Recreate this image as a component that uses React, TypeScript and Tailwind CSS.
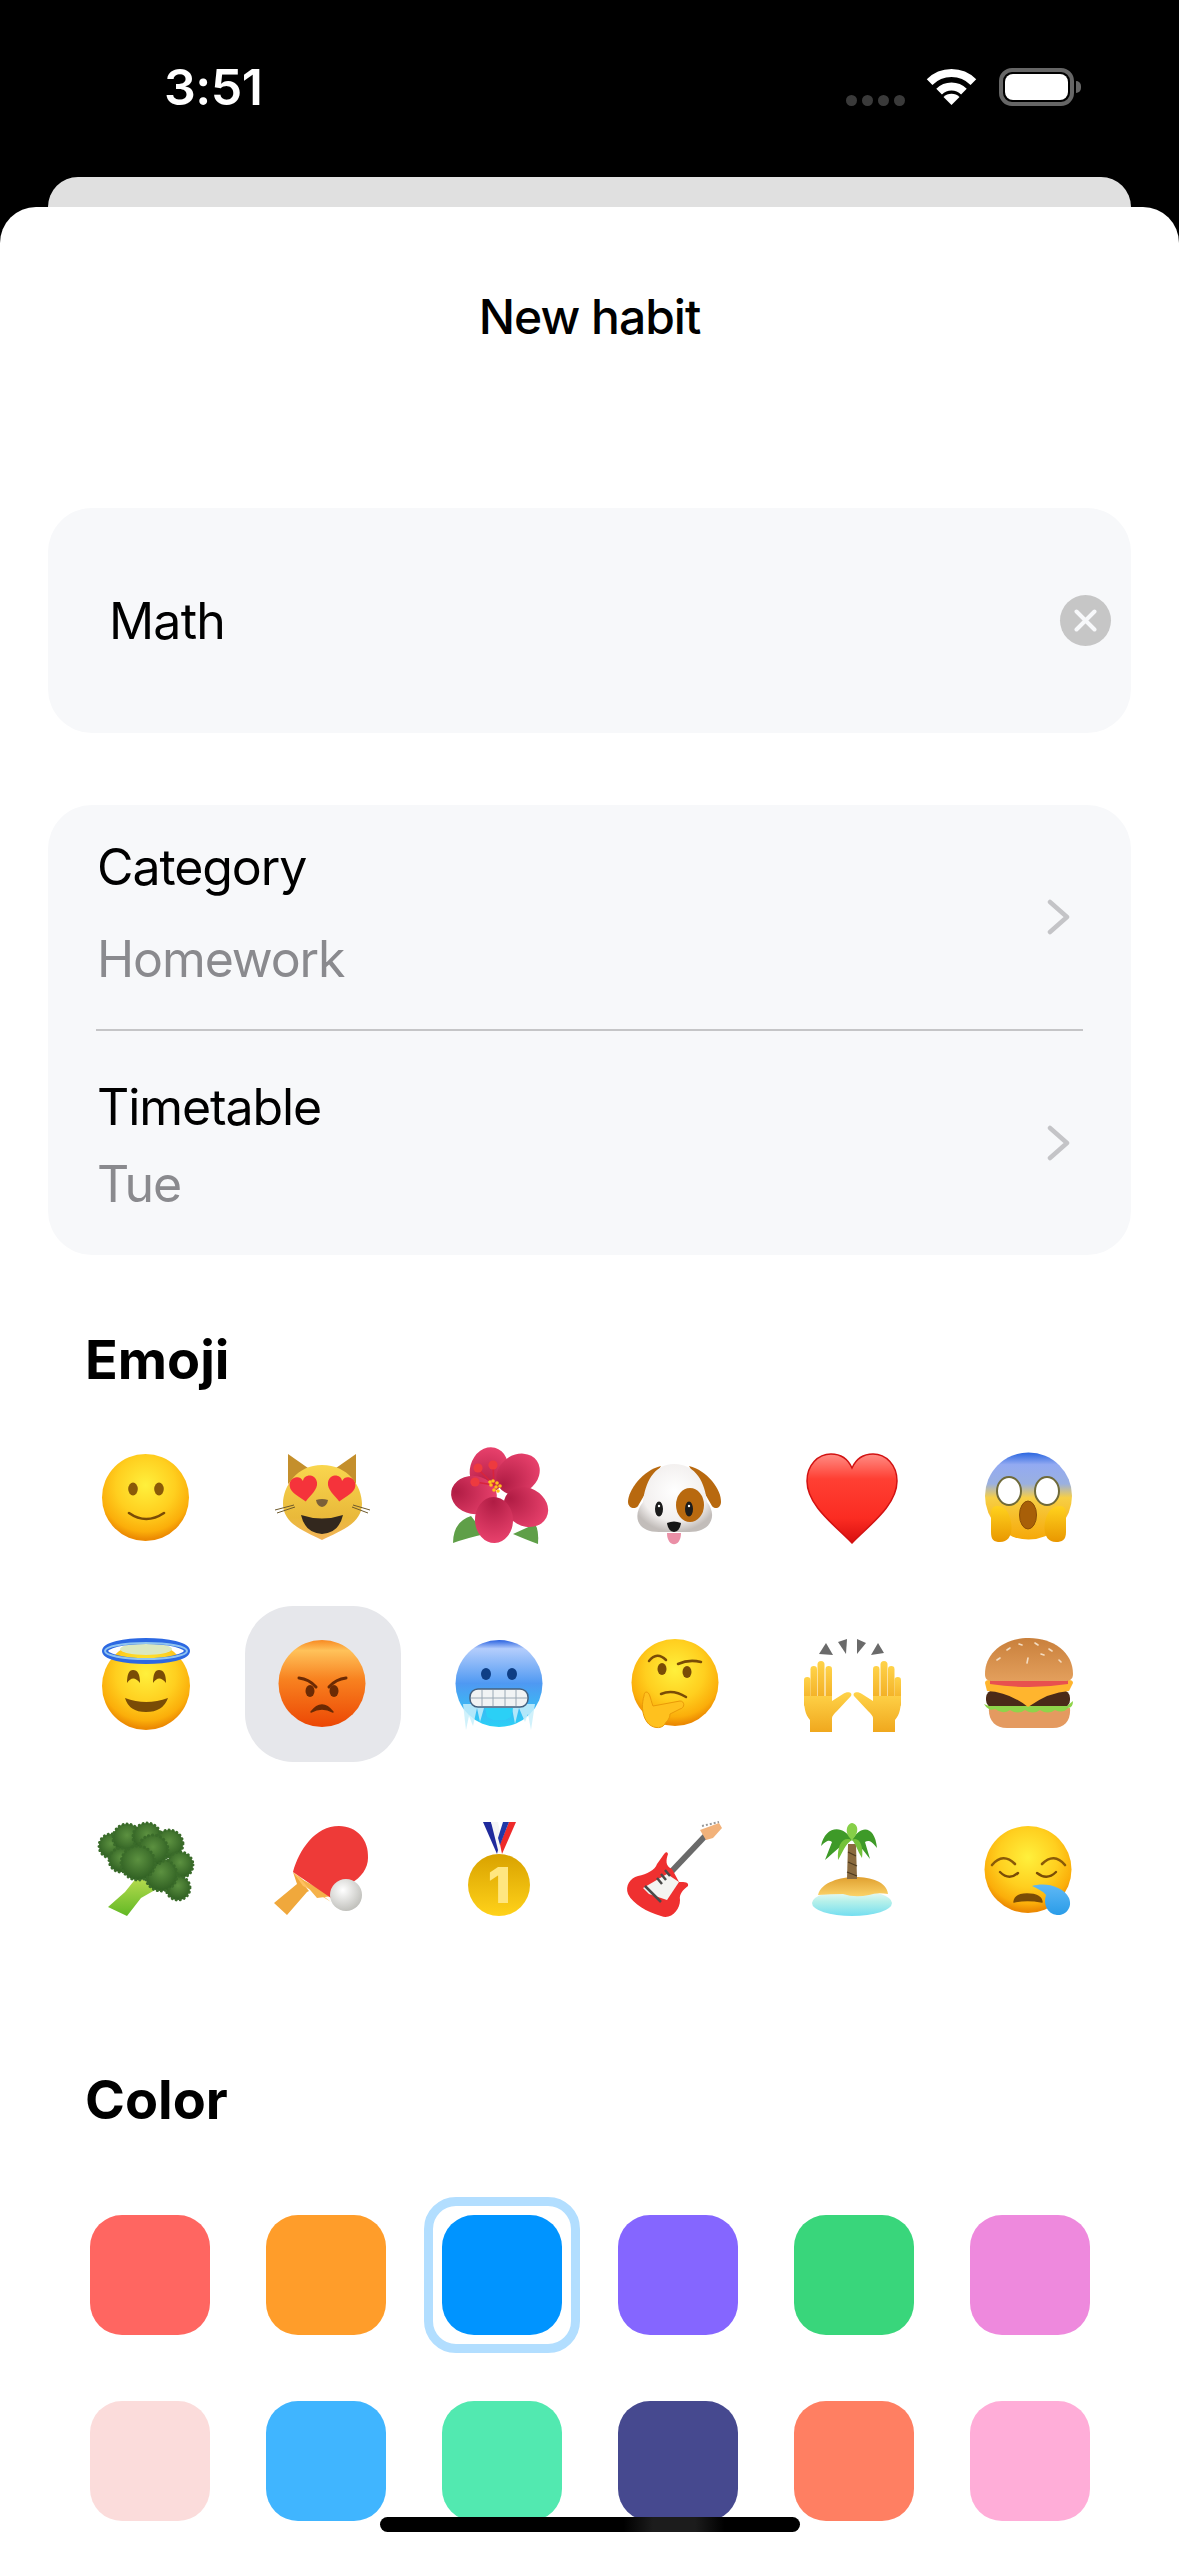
import { ReactNode } from 'react';

const swatches = [
  ['bg-[#ff6661]', 'bg-[#ff9d2a]', 'bg-[#0094ff]', 'bg-[#8566ff]', 'bg-[#39d67b]', 'bg-[#ee89dd]'],
  ['bg-[#fbdcdb]', 'bg-[#40b5ff]', 'bg-[#52e9b0]', 'bg-[#46498f]', 'bg-[#ff7f62]', 'bg-[#ffadd8]'],
];

function FaceGradient({ id }: { id: string }) {
  return (
    <radialGradient id={id} cx="50%" cy="36%" r="62%">
      <stop offset="0%" stopColor="#fff03c" />
      <stop offset="55%" stopColor="#ffcf1f" />
      <stop offset="86%" stopColor="#fbae0a" />
      <stop offset="100%" stopColor="#ec8a02" />
    </radialGradient>
  );
}

function EmojiBox({ children }: { children: ReactNode }) {
  return (
    <svg width="140" height="140" viewBox="-70 -70 140 140">
      {children}
    </svg>
  );
}

function Smile() {
  return (
    <EmojiBox>
      <defs><FaceGradient id="f1" /></defs>
      <circle cx="-1.5" cy="-0.5" r="43.5" fill="url(#f1)" />
      <ellipse cx="-14" cy="-9" rx="4.8" ry="6.5" fill="#8a5a08" />
      <ellipse cx="12" cy="-9" rx="4.8" ry="6.5" fill="#8a5a08" />
      <path d="M-18 15 Q-1 27 17 15" fill="none" stroke="#7a4c06" strokeWidth="2.6" strokeLinecap="round" />
    </EmojiBox>
  );
}

function CatHearts() {
  const heart = 'M0 11 C-5 6 -12 2 -12 -4 C-12 -9 -8 -11 -5 -11 C-3 -11 -1 -10 0 -7 C1 -10 3 -11 5 -11 C8 -11 12 -9 12 -4 C12 2 5 6 0 11Z';
  return (
    <EmojiBox>
      <defs>
        <linearGradient id="c1" x1="0" y1="0" x2="0" y2="1">
          <stop offset="0%" stopColor="#f9d64e" />
          <stop offset="70%" stopColor="#e9b93a" />
          <stop offset="100%" stopColor="#f3b45a" />
        </linearGradient>
      </defs>
      <path d="M-35 -44 L-15 -30 L-35 -14 Z" fill="#c48f2c" />
      <path d="M33 -44 L13 -30 L33 -14 Z" fill="#c48f2c" />
      <path d="M-1 -33 C25 -33 39 -12 39 6 C39 26 15 34 -1 42 C-17 34 -40 26 -40 6 C-40 -12 -26 -33 -1 -33Z" fill="url(#c1)" />
      <path d="M-29 7 L-48 12 M-28 9 L-46 15 M30 7 L47 12 M29 9 L45 15" stroke="#6e5a2c" strokeWidth="1" fill="none" />
      <path transform="translate(-19 -9) rotate(-8) scale(1.15)" d={heart} fill="#f5333b" />
      <path transform="translate(18 -9) rotate(8) scale(1.15)" d={heart} fill="#f5333b" />
      <path d="M-7 2 Q-1 0 5 2 Q4 8 -1 9 Q-6 8 -7 2Z" fill="#7c6038" />
      <path d="M-22 17 Q-1 24 20 17 Q16 35 -1 36 Q-18 35 -22 17Z" fill="#33281e" />
    </EmojiBox>
  );
}

function Flower() {
  const petals: [number, number, number][] = [[-10, -28, 15], [-25, -3, 100], [19, -24, 55], [27, 9, 118], [-5, 22, 178]];
  return (
    <EmojiBox>
      <defs>
        <radialGradient id="fl1" cx="50%" cy="90%" r="90%">
          <stop offset="0%" stopColor="#b01c44" />
          <stop offset="100%" stopColor="#e8416c" />
        </radialGradient>
      </defs>
      <path d="M-46 45 Q-46 24 -28 18 L-14 36 Q-32 40 -46 45Z" fill="#5f9f48" />
      <path d="M39 46 Q40 32 36 26 L14 36 Q28 42 39 46Z" fill="#5f9f48" />
      {petals.map(([x, y, r], i) => (
        <ellipse key={i} cx={x} cy={y} rx="19" ry="23" transform={`rotate(${r} ${x} ${y})`} fill="url(#fl1)" />
      ))}
      <path d="M-5 -13 L-21 -29 M-5 -13 L-6 -33 M-5 -13 L-24 -16" stroke="#d8243c" strokeWidth="1.6" />
      <circle cx="-21" cy="-30" r="4.6" fill="#ee3a3f" />
      <circle cx="-6" cy="-33" r="4.6" fill="#ee3a3f" />
      <circle cx="-24" cy="-16" r="4.6" fill="#ee3a3f" />
      {[[-6, -17], [-2, -15], [-8, -13], [-3, -11], [1, -12], [-5, -8], [-1, -7], [-9, -16]].map(([x, y], i) => (
        <circle key={i} cx={x} cy={y} r="1.8" fill="#ffc21c" />
      ))}
    </EmojiBox>
  );
}

function Dog() {
  return (
    <EmojiBox>
      <defs>
        <radialGradient id="d1" cx="50%" cy="40%" r="60%">
          <stop offset="0%" stopColor="#ffffff" />
          <stop offset="72%" stopColor="#f2efee" />
          <stop offset="100%" stopColor="#c2bdba" />
        </radialGradient>
      </defs>
      <path d="M-14 -32 C-32 -28 -47 -8 -47 4 C-47 10 -40 12 -37 8 Z" fill="#b8690f" />
      <path d="M14 -32 C32 -28 47 -8 46 4 C46 10 40 12 37 8 Z" fill="#b8690f" />
      <path d="M-1 -34 C22 -34 30 -14 32 4 C42 16 38 34 14 34 L-16 34 C-40 34 -42 16 -32 4 C-30 -14 -22 -34 -1 -34Z" fill="url(#d1)" />
      <ellipse cx="15" cy="7" rx="14" ry="17" fill="#b8690f" />
      <ellipse cx="-16" cy="11" rx="4" ry="7.5" fill="#1c1c1c" />
      <ellipse cx="14" cy="11" rx="4" ry="7.5" fill="#1c1c1c" />
      <circle cx="-16" cy="8" r="1.2" fill="#fff" />
      <circle cx="14" cy="8" r="1.2" fill="#fff" />
      <path d="M-8 35 C-8 50 6 50 6 35 Z" fill="#ea8fa6" />
      <path d="M-8 25 Q-1 22 6 25 Q5 33 -1 34 Q-7 33 -8 25Z" fill="#151515" />
    </EmojiBox>
  );
}

function Heart() {
  return (
    <EmojiBox>
      <defs>
        <linearGradient id="h1" x1="0" y1="0" x2="0" y2="1">
          <stop offset="0%" stopColor="#ff8d85" />
          <stop offset="28%" stopColor="#ff3f33" />
          <stop offset="72%" stopColor="#fb2c22" />
          <stop offset="100%" stopColor="#d80f0f" />
        </linearGradient>
      </defs>
      <path d="M1 45 C-15 28 -44 8 -44 -17 C-44 -33 -33 -44 -20 -44 C-10 -44 -3 -39 1 -30 C5 -39 12 -44 22 -44 C35 -44 46 -33 46 -17 C46 8 17 28 1 45Z" fill="url(#h1)" stroke="#d21212" strokeWidth="1.5" />
    </EmojiBox>
  );
}

function Fear() {
  return (
    <EmojiBox>
      <defs>
        <linearGradient id="s1" x1="0" y1="0" x2="0" y2="1">
          <stop offset="0%" stopColor="#2a66e0" />
          <stop offset="14%" stopColor="#93aaf2" />
          <stop offset="36%" stopColor="#9ab0e0" />
          <stop offset="52%" stopColor="#f7cf45" />
          <stop offset="100%" stopColor="#f6a808" />
        </linearGradient>
        <linearGradient id="s2" x1="0" y1="0" x2="0" y2="1">
          <stop offset="0%" stopColor="#ffd21e" />
          <stop offset="100%" stopColor="#e99700" />
        </linearGradient>
      </defs>
      <circle cx="1.5" cy="-2" r="43.5" fill="url(#s1)" />
      <ellipse cx="-18" cy="-7" rx="12" ry="14" fill="#fff" stroke="#6f6a3a" strokeWidth="2" />
      <ellipse cx="20" cy="-7" rx="12" ry="14" fill="#fff" stroke="#6f6a3a" strokeWidth="2" />
      <ellipse cx="1" cy="17" rx="8.5" ry="14" fill="#a85f08" stroke="#8a4d06" strokeWidth="1" />
      <path d="M-30 8 C-22 8 -18 14 -16 24 C-14 36 -18 44 -27 44 C-33 44 -36 42 -36 34 L-36 16 C-36 11 -34 8 -30 8Z" fill="url(#s2)" />
      <path d="M33 8 C25 8 20 14 18 24 C16 36 20 44 29 44 C35 44 39 42 39 34 L39 16 C39 11 37 8 33 8Z" fill="url(#s2)" />
    </EmojiBox>
  );
}

function Halo() {
  return (
    <EmojiBox>
      <defs><FaceGradient id="a1" /></defs>
      <circle cx="-1" cy="2" r="44" fill="url(#a1)" />
      <ellipse cx="-1" cy="-35" rx="26" ry="6" fill="#dbe8c0" />
      <path d="M-20 -1 Q-20 -14 -14 -14 Q-7 -14 -7 -1 Q-14 -10 -20 -1Z" fill="#7a4c06" />
      <path d="M6 -1 Q6 -14 12 -14 Q19 -14 19 -1 Q12 -10 6 -1Z" fill="#7a4c06" />
      <path d="M-22 14 Q-1 22 21 14 Q16 28 -1 28 Q-18 28 -22 14Z" fill="#7a4c06" />
      <ellipse cx="-1" cy="-33" rx="41" ry="10" fill="none" stroke="#2c68e2" strokeWidth="6" />
      <ellipse cx="-1" cy="-33" rx="41" ry="8" fill="none" stroke="#8fc4f0" strokeWidth="2" />
    </EmojiBox>
  );
}

function Angry() {
  return (
    <EmojiBox>
      <defs>
        <linearGradient id="g1" x1="0" y1="0" x2="0" y2="1">
          <stop offset="0%" stopColor="#f88a22" />
          <stop offset="12%" stopColor="#ffc25a" />
          <stop offset="45%" stopColor="#f88220" />
          <stop offset="100%" stopColor="#ec4704" />
        </linearGradient>
      </defs>
      <circle cx="-1" cy="-0.5" r="43.5" fill="url(#g1)" />
      <ellipse cx="-13" cy="7" rx="4.5" ry="6" fill="#6b2a04" />
      <ellipse cx="11" cy="7" rx="4.5" ry="6" fill="#6b2a04" />
      <path d="M-24 -6 Q-14 -5 -7 3" fill="none" stroke="#6b2a04" strokeWidth="3" strokeLinecap="round" />
      <path d="M23 -6 Q13 -5 6 3" fill="none" stroke="#6b2a04" strokeWidth="3" strokeLinecap="round" />
      <path d="M-12 28 Q-1 14 10 28 Q-1 22 -12 28Z" fill="#6b2a04" stroke="#6b2a04" strokeWidth="1.5" strokeLinejoin="round" />
    </EmojiBox>
  );
}

function Cold() {
  return (
    <EmojiBox>
      <defs>
        <linearGradient id="k1" x1="0" y1="0" x2="0" y2="1">
          <stop offset="0%" stopColor="#2a62e0" />
          <stop offset="10%" stopColor="#b4cdfc" />
          <stop offset="50%" stopColor="#4f99f2" />
          <stop offset="100%" stopColor="#2bd0f6" />
        </linearGradient>
      </defs>
      <circle cx="0" cy="-0.5" r="43.5" fill="url(#k1)" />
      <ellipse cx="-13" cy="-10" rx="5" ry="6" fill="#0e3e85" />
      <ellipse cx="13" cy="-10" rx="5" ry="6" fill="#0e3e85" />
      <path d="M-36 20 L-33 46 L-30 32 L-26 42 L-22 24 L-19 38 L-15 24 L13 24 L16 40 L20 24 L26 38 L29 30 L32 46 L36 20 Z" fill="#c8eefa" opacity="0.85" />
      <path d="M-14 24 H14 L12 33 L6 36 L-6 36 L-12 33Z" fill="#2bd0f6" />
      <rect x="-29" y="5" width="58" height="18" rx="8" fill="#f1f3f4" stroke="#44607e" strokeWidth="1.5" />
      <path d="M-17 6 V22 M-6 6 V22 M6 6 V22 M17 6 V22 M-28 14 H28" stroke="#9aa8b4" strokeWidth="1" />
    </EmojiBox>
  );
}

function Thinking() {
  return (
    <EmojiBox>
      <defs><FaceGradient id="t1" /></defs>
      <circle cx="0" cy="-1.5" r="43.5" fill="url(#t1)" />
      <ellipse cx="-13" cy="-15" rx="4.5" ry="6" fill="#7a4c06" />
      <ellipse cx="12" cy="-12" rx="4.5" ry="6" fill="#7a4c06" />
      <path d="M-26 -23 Q-18 -33 -9 -24" fill="none" stroke="#7a4c06" strokeWidth="2.5" strokeLinecap="round" />
      <path d="M3 -20 Q14 -25 26 -22" fill="none" stroke="#7a4c06" strokeWidth="2.5" strokeLinecap="round" />
      <path d="M-14 10 Q-2 5 11 13" fill="none" stroke="#7a4c06" strokeWidth="2.5" strokeLinecap="round" />
      <path d="M-29 8 C-25 8 -25 14 -22 22 L5 17 C10 17 10 24 5 25 L-5 30 C-5 36 -10 38 -10 40 C-14 46 -24 44 -28 38 C-34 30 -33 18 -31 12 C-31 10 -30 8 -29 8Z" fill="#ffc11e" stroke="#ea9a08" strokeWidth="1" />
    </EmojiBox>
  );
}

function RaisedHand() {
  return (
    <g>
      <rect x="-47" y="-7" width="6.5" height="30" rx="3.2" />
      <rect x="-40.5" y="-18" width="6.5" height="40" rx="3.2" />
      <rect x="-33.5" y="-23" width="7" height="44" rx="3.5" />
      <rect x="-25.5" y="-18" width="6.5" height="40" rx="3.2" />
      <path d="M-47 12 L-19 12 L-19 17 L-8 10 C-4 7 2 8 0 12 L-14 27 C-17 30 -19 32 -19 34 L-19 48 L-41 48 L-41 36 C-46 30 -47 24 -47 12Z" />
    </g>
  );
}

function Hands() {
  return (
    <EmojiBox>
      <defs>
        <linearGradient id="r1" x1="0" y1="0" x2="0" y2="1">
          <stop offset="0%" stopColor="#ffd349" />
          <stop offset="100%" stopColor="#f0a81e" />
        </linearGradient>
      </defs>
      <g fill="#6a6a6a">
        <path d="M-32 -30 L-25 -41 L-18 -29Z" />
        <path d="M-13 -42 L-4 -45 L-5 -30Z" />
        <path d="M6 -45 L15 -41 L6 -30Z" />
        <path d="M20 -29 L27 -41 L33 -31Z" />
      </g>
      <g fill="url(#r1)">
        <RaisedHand />
        <g transform="translate(3 0) scale(-1 1)"><RaisedHand /></g>
      </g>
    </EmojiBox>
  );
}

function Burger() {
  return (
    <EmojiBox>
      <defs>
        <linearGradient id="b1" x1="0" y1="0" x2="0" y2="1">
          <stop offset="0%" stopColor="#c9803c" />
          <stop offset="100%" stopColor="#e39f5c" />
        </linearGradient>
      </defs>
      <path d="M-38 24 H43 C44 36 38 44 26 44 H-20 C-32 44 -39 36 -38 24Z" fill="#e49a60" />
      <rect x="-41" y="6" width="84" height="18" rx="8" fill="#4a2a18" />
      <path d="M-43 20 Q-38 28 -32 25 Q-24 31 -17 26 Q-9 31 -2 26 Q6 31 13 26 Q21 31 28 26 Q36 30 41 24 Q46 24 46 17 L40 22 L-38 22 Z" fill="#8fd44a" />
      <path d="M-42 -1 Q-42 -4 -38 -4 H42 Q46 -4 46 -1 L42 7 Q22 8 1 23 Q-18 8 -40 7Z" fill="#ffb52e" />
      <path d="M-37 -6 H41 V0 Q2 6 -37 0Z" fill="#e8504f" />
      <path d="M-42 -10 C-42 -32 -22 -46 2 -46 C26 -46 46 -32 46 -10 C46 -4 42 -3 38 -3 H-34 C-40 -3 -42 -5 -42 -10Z" fill="url(#b1)" />
      <path d="M-20 -34 l3 -2 M-8 -40 l3 1 M8 -41 l3 2 M22 -35 l3 2 M-30 -24 l3 -2 M1 -26 l-1 5 M14 -30 l3 1 M32 -24 l2 2" stroke="#f4dcc0" strokeWidth="1.6" strokeLinecap="round" />
    </EmojiBox>
  );
}

function Broccoli() {
  const blobs: [number, number, number][] = [[-36, -24, 12], [-20, -32, 14], [0, -33, 14], [22, -26, 14], [33, -5, 13], [31, 18, 12], [-26, -10, 12], [14, 5, 16], [6, -20, 15], [-9, -7, 17]];
  return (
    <EmojiBox>
      <defs>
        <linearGradient id="o1" x1="0" y1="0" x2="0" y2="1">
          <stop offset="0%" stopColor="#b8dc50" />
          <stop offset="100%" stopColor="#62b825" />
        </linearGradient>
        <radialGradient id="o2" cx="50%" cy="40%" r="60%">
          <stop offset="0%" stopColor="#5c9140" />
          <stop offset="100%" stopColor="#2f5f22" />
        </radialGradient>
      </defs>
      <path d="M-10 7 L3 13 L8 20 L-6 28 L-20 46 L-39 37 L-22 22 Z" fill="url(#o1)" />
      {blobs.map(([x, y, r], i) => (
        <circle key={i} cx={x} cy={y} r={r} fill="url(#o2)" stroke="#3a6b2a" strokeWidth="3" strokeDasharray="0.1 4" strokeLinecap="round" />
      ))}
    </EmojiBox>
  );
}

function Paddle() {
  return (
    <EmojiBox>
      <defs>
        <radialGradient id="p1" cx="40%" cy="35%" r="70%">
          <stop offset="0%" stopColor="#ffffff" />
          <stop offset="100%" stopColor="#bdbdb8" />
        </radialGradient>
      </defs>
      <path d="M-30 2 L-14 21 L-16 22 L-36 45 L-49 33 L-26 14Z" fill="#f0a83c" />
      <path d="M-30 2 L8 32 L-8 22 L-20 16Z" fill="#ffc060" />
      <path d="M-30 0 L-6 28 L10 26 L-20 10Z" fill="#f5b24a" />
      <path d="M-30 2 C-24 -20 -8 -44 16 -44 C34 -44 46 -30 45 -12 C45 -2 38 8 28 13 L8 28Z" fill="#ee3a38" />
      <circle cx="23" cy="25" r="16" fill="url(#p1)" />
    </EmojiBox>
  );
}

function Medal() {
  return (
    <EmojiBox>
      <defs>
        <linearGradient id="m1" x1="0" y1="0" x2="0" y2="1">
          <stop offset="0%" stopColor="#d9a200" />
          <stop offset="100%" stopColor="#ffd21a" />
        </linearGradient>
      </defs>
      <path d="M-16 -48 H-8 L1 -28 L-2 -16 Z" fill="#1f2a9c" />
      <path d="M-8 -48 H-1 L3 -28 L0 -16Z" fill="#f5f5f5" />
      <path d="M17 -48 H10 L1 -26 L3 -16 Z" fill="#ee2a2a" />
      <path d="M4 -48 H10 L1 -25 L-1 -32 Z" fill="#2038a8" />
      <circle cx="0" cy="15" r="31" fill="url(#m1)" />
      <text x="0" y="33" textAnchor="middle" fontSize="50" fontWeight="900" fontFamily="Inter, sans-serif" fill="#ffe680">1</text>
    </EmojiBox>
  );
}

function Guitar() {
  return (
    <EmojiBox>
      <path d="M-4 2 L32 -36" stroke="#6a6a6a" strokeWidth="6" />
      <path d="M25 -40 L44 -47 L47 -42 L38 -32 L31 -30Z" fill="#f2b27a" />
      <path d="M27 -44 L44 -48" stroke="#999" strokeWidth="2" strokeDasharray="2 2" />
      <path d="M-13 -13 C-10 -18 -8 -19 -7 -16 C-9 -10 -10 -4 -3 -1 L4 12 C10 12 14 12 13 16 C8 20 4 24 5 30 C5 40 -4 50 -14 46 C-28 42 -42 34 -47 24 C-50 16 -45 8 -37 6 C-28 4 -20 0 -18 -6Z" fill="#ef3030" />
      <path d="M-8 4 L4 12 L-8 30 L-26 24 L-32 18Z" fill="#f4f4f2" />
      <path d="M-30 16 L-14 32 M-10 0 L-5 6 M-14 4 L-9 10 M-18 8 L-13 14" stroke="#4a4a4a" strokeWidth="2.5" />
    </EmojiBox>
  );
}

function Island() {
  return (
    <EmojiBox>
      <defs>
        <linearGradient id="i1" x1="0" y1="0" x2="0" y2="1">
          <stop offset="0%" stopColor="#f4fbf6" />
          <stop offset="45%" stopColor="#b4f0ea" />
          <stop offset="100%" stopColor="#74def0" />
        </linearGradient>
        <linearGradient id="i2" x1="0" y1="0" x2="0" y2="1">
          <stop offset="0%" stopColor="#e0a030" />
          <stop offset="100%" stopColor="#fbd268" />
        </linearGradient>
      </defs>
      <ellipse cx="1" cy="33" rx="40" ry="13" fill="url(#i1)" />
      <path d="M-33 25 C-30 12 -10 7 4 7 C20 7 36 12 37 24 Q26 22 18 25 Q4 28 -8 24 Q-20 24 -33 25Z" fill="url(#i2)" />
      <path d="M-3 -26 L5 -26 L6 9 L-4 9 Z" fill="#8a6a3e" />
      <path d="M-3 -18 L5 -14 M-3 -8 L6 -4 M-4 2 L6 6" stroke="#4e3a1e" strokeWidth="1.2" />
      <path d="M1 -30 C-8 -46 -26 -44 -30 -24 C-24 -30 -22 -30 -19 -28 L-26 -10 C-16 -18 -10 -26 1 -30Z" fill="#3e9a28" />
      <path d="M1 -30 C10 -46 24 -44 26 -22 C20 -30 17 -30 14 -28 L19 -11 C12 -20 8 -26 1 -30Z" fill="#3e9a28" />
      <path d="M1 -30 C-8 -34 -14 -26 -13 -10 C-8 -18 -6 -26 1 -30Z" fill="#74c23a" />
      <path d="M1 -30 C8 -34 13 -24 11 -12 C6 -20 5 -26 1 -30Z" fill="#74c23a" />
      <path d="M1 -30 C-7 -36 -5 -46 1 -47 C7 -46 9 -38 1 -30Z" fill="#86cf48" />
    </EmojiBox>
  );
}

function Sleepy() {
  return (
    <EmojiBox>
      <defs>
        <FaceGradient id="z1" />
        <linearGradient id="z2" x1="0" y1="0" x2="0" y2="1">
          <stop offset="0%" stopColor="#5fb8f5" />
          <stop offset="100%" stopColor="#2a9ce8" />
        </linearGradient>
      </defs>
      <circle cx="1" cy="-0.5" r="43.5" fill="url(#z1)" />
      <path d="M-35 -5 Q-24 -18 -12 -6" fill="none" stroke="#8a5a08" strokeWidth="2.6" strokeLinecap="round" />
      <path d="M15 -6 Q27 -18 38 -5" fill="none" stroke="#8a5a08" strokeWidth="2.6" strokeLinecap="round" />
      <path d="M-27 2 Q-18 11 -9 3" fill="none" stroke="#7a4c06" strokeWidth="2.4" strokeLinecap="round" />
      <path d="M10 3 Q20 11 29 2" fill="none" stroke="#7a4c06" strokeWidth="2.4" strokeLinecap="round" />
      <path d="M-13 32 Q-12 24 0 24 Q14 24 15 32 Q0 29 -13 32Z" fill="#7a4c06" stroke="#7a4c06" strokeWidth="1.5" strokeLinejoin="round" />
      <path d="M5 16 C18 12 36 16 42 28 C46 38 38 46 30 45 C20 44 16 34 19 25 C16 21 11 19 5 16Z" fill="url(#z2)" />
    </EmojiBox>
  );
}

const emojiRows = [
  [Smile, CatHearts, Flower, Dog, Heart, Fear],
  [Halo, Angry, Cold, Thinking, Hands, Burger],
  [Broccoli, Paddle, Medal, Guitar, Island, Sleepy],
];

function Chevron() {
  return (
    <svg width="23" height="36" viewBox="0 0 23 36" fill="none">
      <path d="M3 3 L20 18 L3 33" stroke="#c4c4c7" strokeWidth="4.5" strokeLinecap="round" strokeLinejoin="round" />
    </svg>
  );
}

function StatusBar() {
  return (
    <div className="h-[177px] flex items-start justify-between pl-[164px] pr-[98px] pt-[57px] text-white">
      <span className="text-[50px] leading-[60px] font-semibold tracking-[-0.5px]">3:51</span>
      <div className="flex items-start pt-[11px]">
        <div className="flex gap-[5px] pt-[27px] mr-[21px]">
          {[0, 1, 2, 3].map((i) => (
            <div key={i} className="w-[11px] h-[11px] rounded-full bg-[#3a3a3a]" />
          ))}
        </div>
        <svg className="mr-[22px]" width="51" height="38" viewBox="0 0 51 38" fill="none">
          <path d="M3.6 14.1 A31 31 0 0 1 47.4 14.1" stroke="#fff" strokeWidth="8" />
          <path d="M13.1 23.6 A17.5 17.5 0 0 1 37.9 23.6" stroke="#fff" strokeWidth="8" />
          <path d="M25.5 37 L17.5 29 A11.3 11.3 0 0 1 33.5 29 Z" fill="#fff" />
        </svg>
        <div className="flex items-center">
          <div className="w-[75px] h-[38px] rounded-[13px] border-[4px] border-[#666666] p-[2px]">
            <div className="w-full h-full rounded-[8px] bg-white" />
          </div>
          <div className="ml-[2px] w-[5px] h-[12px] rounded-r-full bg-[#666666]" />
        </div>
      </div>
    </div>
  );
}

export default function App() {
  return (
    <div className="relative w-[1179px] h-[2556px] overflow-hidden bg-black flex flex-col font-[Inter,sans-serif] text-black">
      <StatusBar />
      <div className="mx-[48px] h-[30px] rounded-t-[30px] bg-[#e0e0e0]" />

      <div className="flex-1 min-h-0 rounded-t-[36px] bg-white">
        <div className="h-[220px] flex items-center justify-center text-[48px] font-medium tracking-[-1px]">New habit</div>

        {/* Name field */}
        <div className="mt-[81px] mx-[48px] h-[225px] rounded-[44px] bg-[#f7f8fa] flex items-center justify-between pl-[61px] pr-[20px]">
          <span className="text-[50px] leading-[60px] font-normal tracking-[-0.8px]">Math</span>
          <div className="w-[51px] h-[51px] rounded-full bg-[#c6c6c6] flex items-center justify-center">
            <svg width="23" height="23" viewBox="0 0 23 23" fill="none">
              <path d="M2.5 2.5 L20.5 20.5 M20.5 2.5 L2.5 20.5" stroke="#f7f8fa" strokeWidth="4" strokeLinecap="round" />
            </svg>
          </div>
        </div>

        {/* Category / timetable */}
        <div className="mt-[72px] mx-[48px] h-[450px] rounded-[44px] bg-[#f7f8fa] flex flex-col text-[50px] leading-[60px] tracking-[-1.1px]">
          <div className="h-[224px] flex items-center justify-between pl-[49px] pr-[61px]">
            <div className="mb-[8px]">
              <div>Category</div>
              <div className="mt-[32px] text-[#8a8a8e]">Homework</div>
            </div>
            <Chevron />
          </div>
          <div className="mx-[48px] h-[1.5px] bg-[#c5c5c7]" />
          <div className="flex-1 flex items-center justify-between pl-[49px] pr-[61px]">
            <div className="mt-[6px]">
              <div>Timetable</div>
              <div className="mt-[17px] text-[#8a8a8e]">Tue</div>
            </div>
            <Chevron />
          </div>
        </div>

        {/* Emoji */}
        <h2 className="mt-[72px] pl-[85px] text-[54px] leading-[66px] font-bold">Emoji</h2>
        <div className="mt-[27px] ml-[69px] grid grid-cols-[repeat(6,156px)] auto-rows-[156px] gap-x-[20px] gap-y-[30px]">
          {emojiRows.flat().map((Emoji, i) => (
            <div key={i} className={`flex items-center justify-center rounded-[48px] ${i === 7 ? 'bg-[#e6e7eb]' : ''}`}>
              <Emoji />
            </div>
          ))}
        </div>

        {/* Color */}
        <h2 className="mt-[119px] pl-[85px] text-[54px] leading-[66px] font-bold">Color</h2>
        <div className="mt-[64px] ml-[72px] grid grid-cols-[repeat(6,156px)] auto-rows-[156px] gap-x-[20px] gap-y-[30px]">
          {swatches.flat().map((color, i) => (
            <div key={i} className={`flex items-center justify-center rounded-[32px] ${i === 2 ? 'border-[9px] border-[#b2deff]' : ''}`}>
              <div className={`w-[120px] h-[120px] shrink-0 rounded-[32px] ${color}`} />
            </div>
          ))}
        </div>
      </div>

      {/* Home indicator */}
      <div className="absolute left-[380px] top-[2517px] w-[420px] h-[15px] rounded-full bg-[linear-gradient(90deg,#000_58%,#1c1c1c_65%,#1c1c1c_75%,#000_82%)]" />
    </div>
  );
}
